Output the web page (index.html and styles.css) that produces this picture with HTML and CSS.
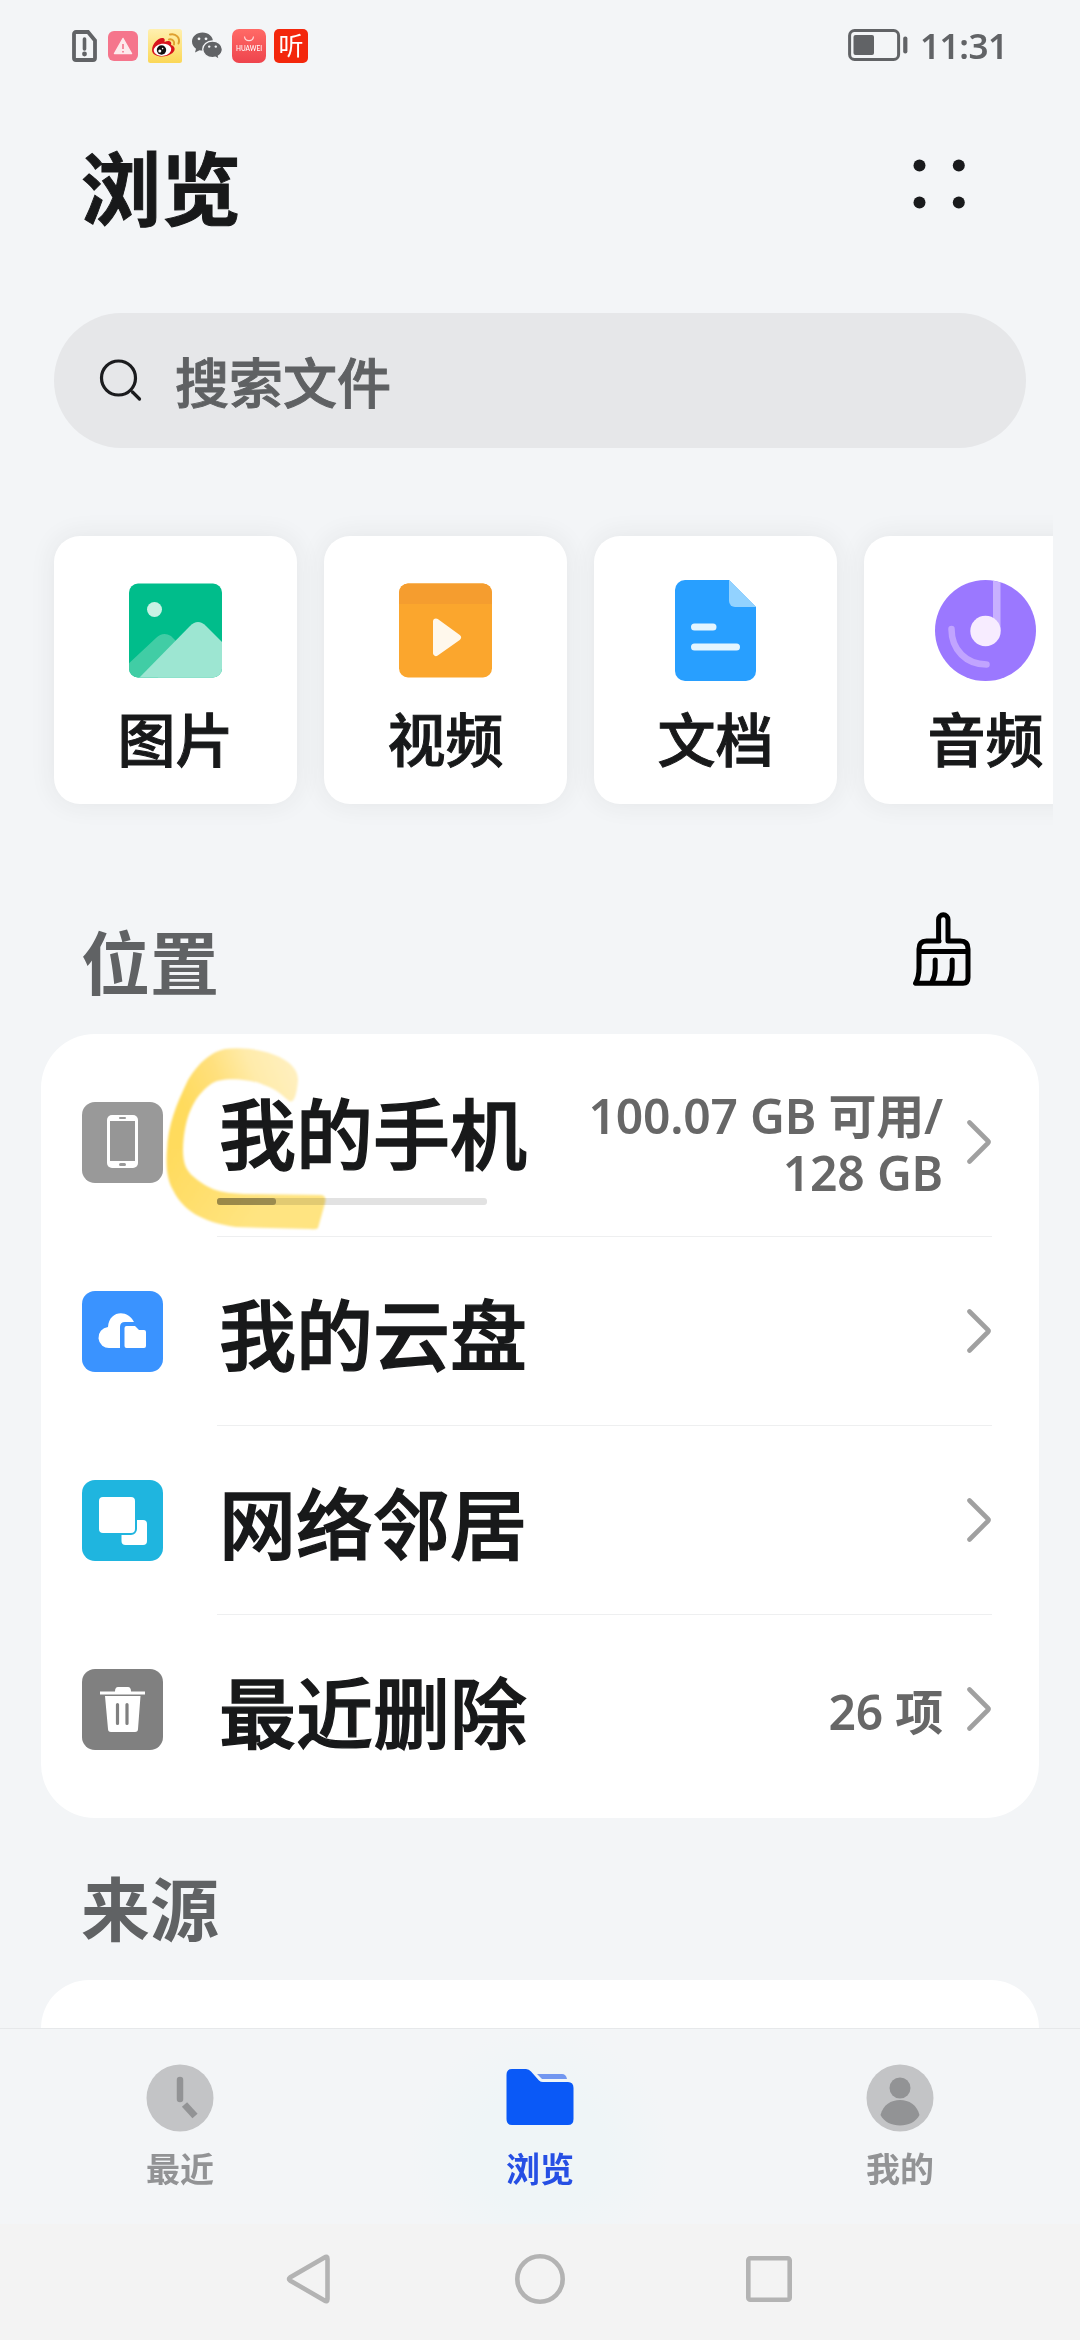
FILE: index.html
```html
<!DOCTYPE html>
<html lang="zh-CN">
<head>
<meta charset="utf-8">
<title>浏览</title>
<link rel="stylesheet" href="styles.css">
</head>
<body>
<div class="screen">
  <header class="status">
    <div class="status-icons">
      <svg class="s-doc" width="25" height="32" viewBox="0 0 25 32"><path d="M4 2H16L23 10.500V28a2 2 0 0 1-2 2H4a2 2 0 0 1-2-2V4a2 2 0 0 1 2-2Z" fill="none" stroke="#616366" stroke-width="3.800"/><path d="M12.500 9v10" stroke="#616366" stroke-width="3.600" stroke-linecap="round"/><circle cx="12.500" cy="24" r="2.400" fill="#616366"/></svg>
      <svg class="s-warn" width="30" height="30" viewBox="0 0 30 30"><rect width="30" height="30" rx="6" fill="#f5758c"/><path d="M15 7.500 23.500 22.500H6.500Z" fill="#fdeaec" stroke="#fdeaec" stroke-width="1.500" stroke-linejoin="round"/><path d="M15 13v5M15 20v1.500" stroke="#f5758c" stroke-width="1.600"/></svg>
      <svg class="s-weibo" width="34" height="34" viewBox="0 0 34 34"><defs><linearGradient id="wb" x2="0" y2="1"><stop offset="0" stop-color="#fff0b0"/><stop offset="1" stop-color="#fbd757"/></linearGradient></defs><rect width="34" height="34" rx="2.500" fill="url(#wb)"/><path d="M4 21C4 15 10 9 14 9c3 0 3 2 2.500 4 3-1.500 8-1.500 6.500 3 4 1 5 5 1.500 8C17 30 4 28 4 21Z" fill="#d8151d"/><ellipse cx="14.500" cy="20.800" rx="8.800" ry="6" fill="#fff" transform="rotate(-8 14.500 20.800)"/><circle cx="13.500" cy="21" r="4.700" fill="#111"/><circle cx="11.800" cy="22" r="1.500" fill="#fff"/><circle cx="14.600" cy="19.600" r=".8" fill="#fff"/><path d="M21 10.500c3.500-.8 6 2 5 5M22 5.500c6-1.500 10.500 3.500 8.500 9" fill="none" stroke="#dfa02f" stroke-width="2" stroke-linecap="round"/></svg>
      <svg class="s-chat" width="32" height="28" viewBox="0 0 32 28"><path d="M11.500.5C5.500.5 1 4.500 1 9.500c0 3 1.500 5.500 4 7.200L4 20.500l4.500-2.300c1 .2 2 .3 3 .3C17.500 18.500 22 14.500 22 9.500S17.500.5 11.500.5Z" fill="#616366"/><path d="M21.500 9c-5.500 0-9.800 3.700-9.800 8.300s4.300 8.300 9.800 8.300c1 0 2-.1 2.900-.4l4 2.300-1-3.500c2.500-1.500 4-4 4-6.700C31.400 12.700 27 9 21.500 9Z" fill="#616366" stroke="#f3f5f7" stroke-width="1.300"/><g fill="#f3f5f7"><circle cx="8" cy="6.800" r="1.400"/><circle cx="15" cy="6.800" r="1.400"/><circle cx="18.200" cy="14.600" r="1.200"/><circle cx="24.800" cy="14.600" r="1.200"/></g></svg>
      <svg class="s-huawei" width="34" height="34" viewBox="0 0 34 34"><defs><linearGradient id="hw" x2="0" y2="1"><stop offset="0" stop-color="#ff6a66"/><stop offset="1" stop-color="#ee444d"/></linearGradient></defs><rect width="34" height="34" rx="7" fill="url(#hw)"/><path d="M12.500 7.500c.5 5.500 8.500 5.500 9 0" fill="none" stroke="#ffd9d9" stroke-width="1.200"/><text x="17" y="22" text-anchor="middle" class="huawei-word" textLength="26" lengthAdjust="spacingAndGlyphs">HUAWEI</text></svg>
      <svg class="s-ting" width="34" height="34" viewBox="0 0 34 34"><rect width="34" height="34" rx="5" fill="#f3270c"/><text x="17" y="25.500" text-anchor="middle" class="ting-word">听</text></svg>
    </div>
    <div class="status-right">
      <svg width="60" height="32" viewBox="0 0 60 32"><rect x="1.600" y="1.600" width="49" height="28.800" rx="5" fill="none" stroke="#616366" stroke-width="3"/><rect x="5.500" y="6" width="20.500" height="20" rx="2" fill="#616366"/><rect x="55.200" y="7.500" width="4.200" height="17" rx="2" fill="#616366"/></svg>
      <span class="time">11:31</span>
    </div>
  </header>

  <div class="titlebar">
    <h1 class="title">浏览</h1>
    <svg class="more" width="52" height="50" viewBox="0 0 52 50" fill="#191a1c"><circle cx="6.500" cy="6.500" r="6"/><circle cx="45.800" cy="6.500" r="6"/><circle cx="6.500" cy="43.500" r="6"/><circle cx="45.800" cy="43.500" r="6"/></svg>
  </div>

  <div class="search">
    <svg width="44" height="44" viewBox="0 0 44 44" fill="none" stroke="#1b1c1e" stroke-width="3.200" stroke-linecap="round"><circle cx="19.500" cy="19" r="17"/><path d="M33.500 33 40.500 40"/></svg>
    <span>搜索文件</span>
  </div>

  <div class="categories">
    <div class="card">
      <svg width="101" height="101" viewBox="0 0 101 101"><clipPath id="pic"><rect x="4" y="3.500" width="93" height="94" rx="9"/></clipPath><g clip-path="url(#pic)"><rect width="101" height="101" fill="#00bd8b"/><circle cx="29.500" cy="29.500" r="7.500" fill="#c9f2e4"/><path d="M0 87 31 58q7-7 15-2L58 68 30 101H0Z" fill="#41cda5"/><path d="M14 98 65 46Q73 38 81 46L101 66V101H14Z" fill="#9de6d2"/></g></svg>
      <span>图片</span>
    </div>
    <div class="card">
      <svg width="101" height="101" viewBox="0 0 101 101"><clipPath id="vid"><rect x="4" y="3.500" width="93" height="94" rx="9"/></clipPath><g clip-path="url(#vid)"><rect width="101" height="101" fill="#fba62d"/><rect width="101" height="24" fill="#f59d2f"/></g><path d="M41 41.500 63 57.500 41 73Z" fill="#fff8ec" stroke="#fff8ec" stroke-width="6" stroke-linejoin="round"/></svg>
      <span>视频</span>
    </div>
    <div class="card">
      <svg width="101" height="101" viewBox="0 0 101 101"><path d="M20 0H64L91 27V91a10 10 0 0 1-10 10H20A10 10 0 0 1 10 91V10A10 10 0 0 1 20 0Z" fill="#289fff"/><path d="M64 0 91 27H70a6 6 0 0 1-6-6Z" fill="#92d2ff"/><path d="M29.500 47H48M29.500 67H71.500" stroke="#e4f5ff" stroke-width="7" stroke-linecap="round"/></svg>
      <span>文档</span>
    </div>
    <div class="card">
      <svg width="101" height="101" viewBox="0 0 101 101"><circle cx="50.500" cy="50.500" r="50.500" fill="#9b78ff"/><path d="M58 .8 Q62 1.200 65.500 2.500V51H58Z" fill="#c8b0ff"/><circle cx="50.500" cy="51" r="15.200" fill="#f7ecff"/><path d="M16.500 49c0 21 15 35.500 35 35.500" fill="none" stroke="#c1a4ff" stroke-width="6.500" stroke-linecap="round"/></svg>
      <span>音频</span>
    </div>
  </div>

  <div class="section-head">
    <h2>位置</h2>
    <svg class="brush" width="58" height="75" viewBox="0 0 58 75" fill="none" stroke="#000" stroke-width="5" stroke-linejoin="round" stroke-linecap="round"><path d="M26 30H13.500Q6 30 6 38V57Q6 66 2.600 72.200H50Q55 72.200 55 66.500V38Q55 30 47.500 30H35V8.500a4.700 4.700 0 0 0-9.400 0V30M6 40.500H55M22.200 49V58Q22.200 65 19 71M39.200 49V58Q39.200 65 36 71"/></svg>
  </div>

  <div class="panel">
    <div class="row">
      <svg class="icon" viewBox="0 0 81 81"><rect width="81" height="81" rx="13" fill="#999"/><rect x="25" y="13" width="31" height="53" rx="5" fill="#fff"/><rect x="28" y="19" width="25" height="40" fill="#969696"/><rect x="37" y="15" width="7" height="2" rx="1" fill="#999"/><rect x="37" y="61" width="7" height="3" rx="1.500" fill="#999"/></svg>
      <div class="row-main">
        <div class="storage"><span class="name">我的手机</span><div class="bar"><div class="bar-fill"></div></div></div>
        <span class="value">100.07 GB 可用/<br>128 GB</span>
        <svg class="chev" viewBox="0 0 24 44"><path d="M2.500 2.500 21 21Q22 22 21 23L2.500 41.500"/></svg>
      </div>
      <svg class="marker" viewBox="160 1040 175 195"><defs><linearGradient id="ink" gradientUnits="userSpaceOnUse" x1="190" y1="1120" x2="300" y2="1075"><stop offset="0" stop-color="#ffdb5d"/><stop offset=".35" stop-color="#ffe07d"/><stop offset=".65" stop-color="#ffebaa"/><stop offset="1" stop-color="#fff0c0"/></linearGradient><linearGradient id="ink2" gradientUnits="userSpaceOnUse" x1="170" y1="1150" x2="260" y2="1210"><stop offset="0" stop-color="#ffdb5d"/><stop offset="1" stop-color="#ffe481"/></linearGradient><filter id="soft"><feGaussianBlur stdDeviation="1.200"/></filter></defs><g filter="url(#soft)"><path fill="url(#ink)" d="M167 1150C168 1125 176 1105 188 1080C199 1062 211 1052 225 1049C255 1045 299 1057 298 1080C297 1094 294 1104 289 1101C284 1097 277 1089 264 1085C252 1079 220 1076 211 1084C193 1097 184 1118 183 1150Z"/><path fill="url(#ink2)" d="M167 1149H183C183 1167 188 1173 199 1181C214 1192 225 1193 244 1194L320 1195Q327 1195 325 1203L318 1228Q316 1230 310 1229L236 1227C201 1222 183 1210 173 1190C166 1178 166 1162 167 1149Z"/></g></svg>
    </div>
    <div class="row">
      <svg class="icon" viewBox="0 0 81 81"><rect width="81" height="81" rx="13" fill="#3a93ff"/><path d="M38 57H28A10.500 10.500 0 0 1 26 36C27 19 46 18 52 31H43Q38 31 38 36Z" fill="#fff"/><path d="M44.500 35H53L57 39H62Q64 39 64 41V55Q64 57 62 57H44.500Q42.500 57 42.500 55V37Q42.500 35 44.500 35Z" fill="#fff"/></svg>
      <div class="row-main"><span class="name">我的云盘</span><svg class="chev" viewBox="0 0 24 44"><path d="M2.500 2.500 21 21Q22 22 21 23L2.500 41.500"/></svg></div>
    </div>
    <div class="row">
      <svg class="icon" viewBox="0 0 81 81"><rect width="81" height="81" rx="13" fill="#1fb5df"/><rect x="39.500" y="40" width="25.500" height="25" rx="4" fill="#fff"/><rect x="16" y="16" width="38" height="38" rx="5" fill="#fff" stroke="#1fb5df" stroke-width="2"/></svg>
      <div class="row-main"><span class="name">网络邻居</span><svg class="chev" viewBox="0 0 24 44"><path d="M2.500 2.500 21 21Q22 22 21 23L2.500 41.500"/></svg></div>
    </div>
    <div class="row">
      <svg class="icon" viewBox="0 0 81 81"><rect width="81" height="81" rx="13" fill="#808080"/><path d="M18 22.500H33Q33 18 36 18H46Q49 18 49 22.500H63V25.500H18ZM23 27H58.500L56 60Q56 63 53 63H29Q26 63 26 60Z" fill="#fff"/><path d="M35.500 35.500V54.500M45 35.500V54.500" stroke="#808080" stroke-width="3.200" stroke-linecap="round"/></svg>
      <div class="row-main last"><span class="name">最近删除</span><span class="value">26 项</span><svg class="chev" viewBox="0 0 24 44"><path d="M2.500 2.500 21 21Q22 22 21 23L2.500 41.500"/></svg></div>
    </div>
  </div>

  <div class="section-head source"><h2>来源</h2></div>
  <div class="panel-peek"></div>

  <nav class="tabs">
    <div class="tab">
      <svg width="68" height="68" viewBox="0 0 68 68"><circle cx="34" cy="34" r="33.500" fill="#c3c4c6"/><path d="M34 16V35" stroke="#929395" stroke-width="6.500" stroke-linecap="round"/><path d="M38.500 40.500 49 52" stroke="#929395" stroke-width="7"/></svg>
      <span>最近</span>
    </div>
    <div class="tab active">
      <svg width="68" height="68" viewBox="0 0 68 68"><path d="M31 10H56Q60 10 61 15H36Z" fill="#7297f0"/><path d="M6 5H20Q23 5 25 7.500L33 16.500Q34.500 18 37 18H62Q67.500 18 67.500 24V55Q67.500 61 62 61H6Q.5 61 .5 55V11Q.5 5 6 5Z" fill="#0a59f7"/></svg>
      <span>浏览</span>
    </div>
    <div class="tab">
      <svg width="68" height="68" viewBox="0 0 68 68"><circle cx="34" cy="34" r="33.500" fill="#c3c4c6"/><circle cx="34" cy="24" r="10.500" fill="#929395"/><path d="M14.500 51C17 41 25 36 34 36s17 5 19.500 15C50 58 42 61.500 34 61.500S18 58 14.500 51Z" fill="#929395"/></svg>
      <span>我的</span>
    </div>
  </nav>

  <div class="navkeys">
    <svg width="50" height="50" viewBox="0 0 50 50"><path d="M38.500 3.500Q41.500 1.500 41.500 5V45Q41.500 48.500 38.500 46.500L4 26.500Q2 25 4 23.500Z"/></svg>
    <svg width="50" height="50" viewBox="0 0 50 50"><circle cx="25" cy="25" r="22.700"/></svg>
    <svg width="50" height="50" viewBox="0 0 50 50"><rect x="4.300" y="4.300" width="41.400" height="41.400" rx="2"/></svg>
  </div>
</div>
</body>
</html>
```
FILE: styles.css
```css
* { box-sizing: border-box; }

body {
  margin: 0;
  font-family: "Noto Sans CJK SC", sans-serif;
  background: #f3f5f7;
  color: #18191a;
}

svg { display: block; flex: none; }
h1, h2 { margin: 0; }

.screen {
  width: 1080px;
  height: 2340px;
  overflow: hidden;
  display: flex;
  flex-direction: column;
}
.screen > * { flex: none; }

.status {
  height: 84px;
  padding: 29px 74px 0 72px;
  display: flex;
  justify-content: space-between;
  align-items: flex-start;
}
.status-icons { display: flex; align-items: center; height: 34px; }
.s-warn { margin-left: 11px; }
.s-weibo { margin-left: 10px; }
.s-chat { margin-left: 9px; }
.s-huawei { margin-left: 9px; }
.s-ting { margin-left: 8px; }
.huawei-word { font: 500 7px "Lato", sans-serif; fill: #fff; }
.ting-word { font: 400 25px "Noto Sans CJK SC", sans-serif; fill: #fff; }

.status-right { display: flex; gap: 12px; }
.time {
  font: 600 35px/34px "Noto Sans", sans-serif;
  color: #616366;
  width: 86px;
  white-space: nowrap;
  letter-spacing: -.4px;
}

.titlebar {
  height: 199px;
  padding: 0 115px 0 81px;
  display: flex;
  justify-content: space-between;
  align-items: center;
}
.title {
  font-size: 80px;
  font-weight: 700;
  line-height: 100px;
  -webkit-text-stroke: 1px currentColor;
}

.search {
  width: 972px;
  height: 135px;
  margin: 30px 0 0 54px;
  padding-left: 45px;
  border-radius: 68px;
  background: #e6e7e9;
  display: flex;
  align-items: center;
  gap: 32px;
  font-size: 54px;
  font-weight: 500;
  color: #5f6163;
  -webkit-text-stroke: 1px currentColor;
}

.categories {
  width: 1053px;
  height: 328px;
  margin-top: 58px;
  padding: 30px 0 30px 54px;
  display: flex;
  gap: 27px;
  overflow: hidden;
}
.card {
  flex: none;
  width: 243px;
  height: 268px;
  padding-top: 44px;
  border-radius: 26px;
  background: #fff;
  box-shadow: 0 0 26px rgba(50, 50, 50, .08);
  display: flex;
  flex-direction: column;
  align-items: center;
  gap: 16px;
  font-size: 58px;
  font-weight: 500;
  line-height: 80px;
  -webkit-text-stroke: 1px currentColor;
}

.section-head {
  height: 200px;
  padding: 51px 109px 0 81px;
  display: flex;
  justify-content: space-between;
  align-items: center;
}
.section-head h2 { font-size: 69px; font-weight: 700; line-height: 90px; color: #606264; }
.brush { margin-bottom: 22px; }
.section-head.source { height: 162px; padding-top: 14px; }

.panel {
  width: 998px;
  height: 784px;
  margin-left: 41px;
  padding: 14px 47px 14px 41px;
  border-radius: 54px;
  background: #fff;
}
.row {
  position: relative;
  height: 189px;
  display: flex;
  align-items: center;
  gap: 54px;
}
.icon { width: 81px; height: 81px; }
.row-main {
  flex: 1;
  height: 189px;
  display: flex;
  align-items: center;
  border-bottom: 1px solid #eeeff0;
}
.row-main.last { border-bottom-color: transparent; }
.name {
  display: block;
  margin-left: 2px;
  font-size: 77px;
  font-weight: 500;
  line-height: 103px;
  white-space: nowrap;
  -webkit-text-stroke: 1.4px currentColor;
}
.bar {
  width: 270px;
  height: 7px;
  margin-top: 16px;
  border-radius: 3px;
  background: #e2e2e2;
}
.bar-fill { width: 59px; height: 7px; border-radius: 3px; background: #9b9b9b; }
.value {
  margin-left: auto;
  padding-top: 4px;
  text-align: right;
  font-family: "Noto Sans", "Noto Sans CJK SC", sans-serif;
  font-size: 48px;
  font-weight: 600;
  line-height: 57px;
  letter-spacing: -.2px;
  color: #676767;
  white-space: nowrap;
}
.chev {
  width: 24px;
  height: 44px;
  margin: 0 1px 0 24px;
  fill: none;
  stroke: #a0a0a0;
  stroke-width: 4.6;
  stroke-linecap: round;
}
.name + .chev { margin-left: auto; }

/* highlighter stroke over the first row */
.marker {
  position: absolute;
  left: 78px;
  top: -8px;
  width: 175px;
  height: 195px;
  mix-blend-mode: multiply;
}

.panel-peek {
  width: 998px;
  height: 48px;
  margin-left: 41px;
  border-radius: 54px 54px 0 0;
  background: #fff;
}

.tabs {
  height: 196px;
  padding-top: 35px;
  border-top: 1px solid #e6e8ea;
  background: radial-gradient(ellipse 130px 120px at 540px 120px, #eff5f7 50%, #f3f5f7 100%);
  display: grid;
  grid-template-columns: repeat(3, 360px);
}
.tab {
  display: flex;
  flex-direction: column;
  align-items: center;
  gap: 12px;
  font-size: 34px;
  font-weight: 700;
  line-height: 48px;
  color: #929395;
}
.tab.active { color: #264fe4; }

.navkeys {
  height: 116px;
  padding-bottom: 7px;
  background: #f3f3f3;
  display: flex;
  align-items: center;
  justify-content: center;
  gap: 179px;
  fill: none;
  stroke: #b3b3b3;
  stroke-width: 4.6;
}
```
